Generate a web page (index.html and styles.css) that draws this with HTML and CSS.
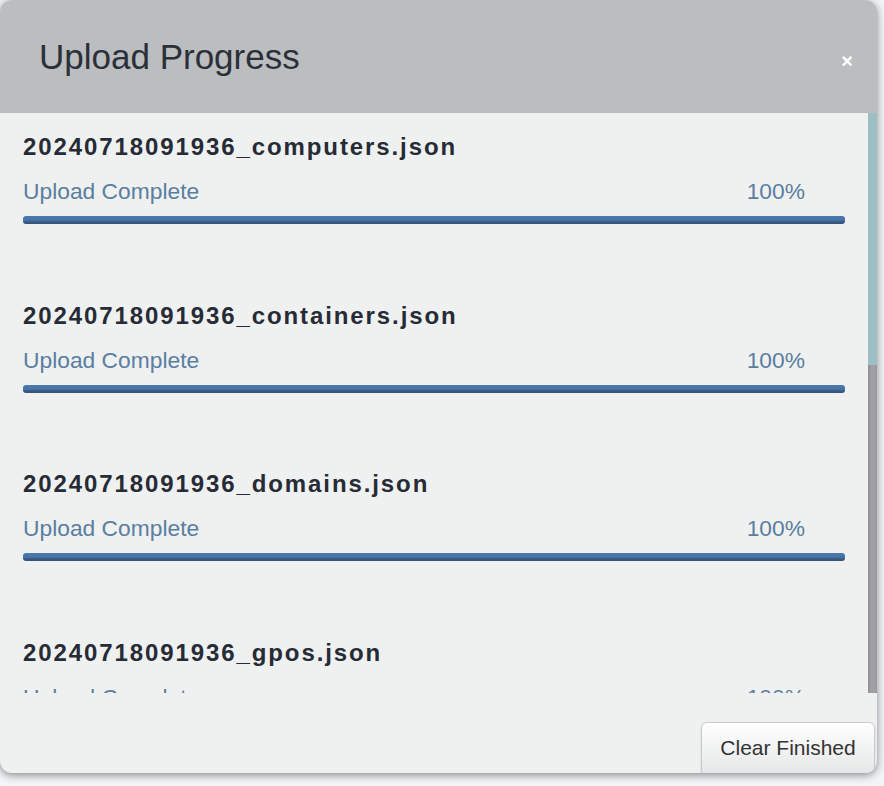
FILE: index.html
```html
<!DOCTYPE html>
<html lang="en">
<head>
<meta charset="utf-8">
<title>Upload Progress</title>
<link rel="stylesheet" href="styles.css">
</head>
<body>
<div class="modal">
  <div class="modal-header">
    <h4 class="modal-title">Upload Progress</h4>
    <button class="close" type="button">×</button>
  </div>
  <div class="modal-body">
    <div class="list">
      <div class="item">
        <div class="file-name">20240718091936_computers.json</div>
        <div class="status"><span>Upload Complete</span><span>100%</span></div>
        <div class="bar"><div class="bar-fill" style="width:100%"></div></div>
      </div>
      <div class="item">
        <div class="file-name">20240718091936_containers.json</div>
        <div class="status"><span>Upload Complete</span><span>100%</span></div>
        <div class="bar"><div class="bar-fill" style="width:100%"></div></div>
      </div>
      <div class="item">
        <div class="file-name">20240718091936_domains.json</div>
        <div class="status"><span>Upload Complete</span><span>100%</span></div>
        <div class="bar"><div class="bar-fill" style="width:100%"></div></div>
      </div>
      <div class="item">
        <div class="file-name">20240718091936_gpos.json</div>
        <div class="status"><span>Upload Complete</span><span>100%</span></div>
        <div class="bar"><div class="bar-fill" style="width:100%"></div></div>
      </div>
      <div class="item">
        <div class="file-name">20240718091936_groups.json</div>
        <div class="status"><span>Upload Complete</span><span>100%</span></div>
        <div class="bar"><div class="bar-fill" style="width:100%"></div></div>
      </div>
      <div class="item">
        <div class="file-name">20240718091936_ous.json</div>
        <div class="status"><span>Upload Complete</span><span>100%</span></div>
        <div class="bar"><div class="bar-fill" style="width:100%"></div></div>
      </div>
      <div class="item">
        <div class="file-name">20240718091936_users.json</div>
        <div class="status"><span>Upload Complete</span><span>100%</span></div>
        <div class="bar"><div class="bar-fill" style="width:100%"></div></div>
      </div>
    </div>
    <div class="scrollbar"><div class="thumb"></div></div>
  </div>
  <div class="modal-footer">
    <button class="btn" type="button">Clear Finished</button>
  </div>
</div>
</body>
</html>
```
FILE: styles.css
```css
html, body {
  margin: 0;
  padding: 0;
}
body {
  background: #f3f4f8;
  font-family: "Liberation Sans", Arial, sans-serif;
  width: 884px;
  height: 786px;
  overflow: hidden;
}
.modal {
  width: 877px;
  height: 773px;
  border-radius: 12px;
  overflow: hidden;
  background: #eff1f1;
  display: flex;
  flex-direction: column;
  box-shadow: 0 2px 8px rgba(0, 0, 0, 0.45);
}
.modal-header {
  height: 113px;
  flex: none;
  box-sizing: border-box;
  background: #bcbdbf;
  display: flex;
  align-items: center;
  justify-content: space-between;
  padding: 0 24px 0 39px;
}
.modal-title {
  margin: 0;
  font-size: 35px;
  font-weight: normal;
  line-height: 40px;
  color: #2a303a;
}
.close {
  border: 0;
  background: transparent;
  padding: 0;
  color: #ffffff;
  font-family: "Liberation Sans", Arial, sans-serif;
  font-weight: bold;
  font-size: 20px;
  line-height: 20px;
  margin-top: 9px;
}
.modal-body {
  height: 580px;
  flex: none;
  display: flex;
}
.list {
  flex: 1;
  min-width: 0;
  overflow: hidden;
  box-sizing: border-box;
  padding: 19px 23px 0 23px;
}
.scrollbar {
  width: 9px;
  flex: none;
  background: linear-gradient(90deg, #8f8f94, #a2a2a7 40%, #9a9a9f);
}
.thumb {
  height: 252px;
  background: #9cbfc3;
}
.item {
  margin-bottom: 76.5px;
}
.item:last-child {
  margin-bottom: 0;
}
.file-name {
  font-size: 24px;
  font-weight: bold;
  letter-spacing: 1.9px;
  line-height: 30px;
  color: #262b35;
  white-space: nowrap;
}
.status {
  margin-top: 16px;
  display: flex;
  justify-content: space-between;
  padding-right: 40px;
  font-size: 22.8px;
  line-height: 26px;
  color: #5a7ea0;
}
.bar {
  margin-top: 12px;
  height: 8px;
  border-radius: 3px;
  overflow: hidden;
  background: #d8dde2;
}
.bar-fill {
  height: 100%;
  background: linear-gradient(#4c7aae 0%, #4672a4 55%, #3a5b84 70%, #355479 100%);
}
.modal-footer {
  flex: 1;
  min-height: 0;
  display: flex;
  justify-content: flex-end;
  align-items: flex-start;
  padding: 29px 2px 0 0;
}
.btn {
  width: 174px;
  height: 54px;
  flex: none;
  box-sizing: border-box;
  border: 1px solid #c9cacc;
  border-radius: 6px;
  background: linear-gradient(#ffffff, #e4e5e6);
  color: #333333;
  font-family: "Liberation Sans", Arial, sans-serif;
  font-size: 21px;
  line-height: 48px;
  padding: 0 0 2px 0;
  box-shadow: 0 1px 2px rgba(0, 0, 0, 0.15);
}
```
